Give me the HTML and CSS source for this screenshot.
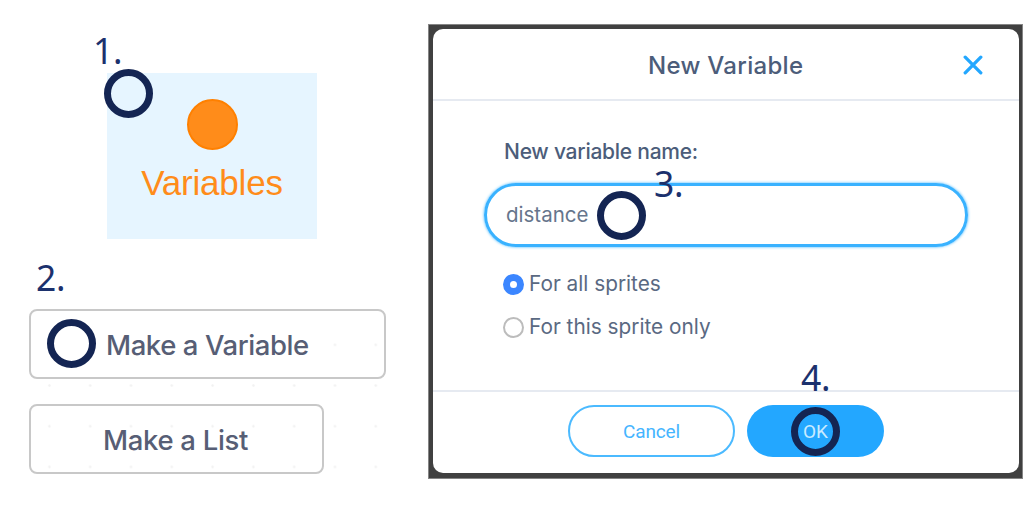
FILE: index.html
```html
<!DOCTYPE html>
<html lang="en">
<head>
<meta charset="utf-8">
<title>New Variable</title>
<link rel="stylesheet" href="styles.css">
</head>
<body>
<main class="guide">
  <section class="palette">
    <div class="category">
      <span class="category-dot"></span>
      <span class="category-name">Variables</span>
    </div>
    <div class="actions">
      <div class="action action-variable"><span>Make a Variable</span></div>
      <div class="action action-list"><span>Make a List</span></div>
    </div>
  </section>
  <section class="backdrop">
    <div class="dialog">
      <header class="dialog-head">
        <h1 class="title">New Variable</h1>
        <svg class="close" viewBox="0 0 20 20"><path d="M2.2 2.2L17.8 17.8M17.8 2.2L2.2 17.8"/></svg>
      </header>
      <div class="dialog-body">
        <div class="field-label"><span>New variable name:</span></div>
        <div class="field"><span>distance</span></div>
        <div class="option"><i class="radio radio-on"></i><span>For all sprites</span></div>
        <div class="option"><i class="radio"></i><span>For this sprite only</span></div>
      </div>
      <footer class="dialog-foot">
        <div class="btn btn-cancel">Cancel</div>
        <div class="btn btn-ok">OK</div>
      </footer>
    </div>
  </section>
  <span class="step step-1">1.</span><i class="ring ring-1"></i>
  <span class="step step-2">2.</span><i class="ring ring-2"></i>
  <span class="step step-3">3.</span><i class="ring ring-3"></i>
  <span class="step step-4">4.</span><i class="ring ring-4"></i>
</main>
</body>
</html>
```
FILE: styles.css
```css
* { box-sizing: border-box; }
body { margin: 0; background: #fff; font-family: Inter, "Liberation Sans", sans-serif; white-space: nowrap; overflow: hidden; }
.guide { position: relative; display: flex; width: 1024px; height: 507px; }

.palette { width: 428px; padding-top: 73px; flex: none; }
.category { width: 210px; height: 166px; margin-left: 107px; padding-top: 26px; display: flex; flex-direction: column; align-items: center; background: #e6f5ff; }
.category-dot { width: 51px; height: 51px; border-radius: 50%; background: #ff8c1a; border: 2px solid #ff8000; }
.category-name { margin-top: 13px; font: 35px/40px "Liberation Sans", Arial, sans-serif; letter-spacing: -.2px; color: #ff8c1a; }

.actions { width: 368px; height: 165px; margin: 70px 0 0 29px; display: flex; flex-direction: column; gap: 25px; background: radial-gradient(circle, #f1f1f1 0, #f1f1f1 .8px, transparent 1.6px) 0 15.5px / 40.8px 40.7px; }
.action { height: 70px; border: 2px solid #c8c8c8; border-radius: 8px; display: flex; align-items: center; font-size: 27.5px; font-weight: 500; color: #575e75; letter-spacing: -.42px; }
.action span { margin-top: 2px; }
.action-variable { width: 357px; padding-left: 75px; background: linear-gradient(#fff, #fff) 0 0 / 290px 100% no-repeat; }
.action-list { width: 295px; padding-left: 72px; letter-spacing: -.32px; }

.backdrop { width: 595px; height: 455px; margin-top: 24px; padding: 4px 3px 5px 4px; background: #404040; border: 1px solid #858585; flex: none; }
.dialog { height: 444px; background: #fff; border-radius: 10px; display: flex; flex-direction: column; color: #4c5d7a; }
.dialog-head { height: 72px; border-bottom: 2px solid #e6eaf1; display: flex; align-items: center; padding: 2px 36px 0 215px; justify-content: space-between; }
.title { margin: 0; font-size: 24px; font-weight: 500; letter-spacing: .3px; }
.close { width: 20px; height: 20px; fill: none; stroke: #23a7ff; stroke-width: 3.3; stroke-linecap: round; }
.dialog-body { flex: 1; padding: 39px 51px 0; }
.field-label { height: 24px; padding-left: 20px; font-size: 21px; line-height: 24px; font-weight: 500; letter-spacing: -.25px; }
.field { margin-top: 19px; height: 64px; border: 3px solid #39b2ff; border-radius: 32px; box-shadow: 0 0 3px #39b2ff; padding-left: 19px; display: flex; align-items: center; font-size: 20.5px; line-height: 24px; color: #66758c; margin-bottom: 23px; }
.field span { margin-top: -1px; }
.option { height: 28px; margin-bottom: 15px; padding-left: 19px; display: flex; align-items: center; gap: 5px; font-size: 20.8px; color: #5a6982; }
.option span { margin-top: -1px; }
.radio { width: 21px; height: 21px; border-radius: 50%; border: 2px solid #bcbcbc; }
.radio-on { border: 7px solid #3b86ff; }
.dialog-foot { height: 83px; border-top: 2px solid #e6eaf1; display: flex; gap: 12px; padding: 13px 0 0 135px; }
.btn { height: 52px; border-radius: 26px; display: flex; align-items: center; justify-content: center; font: 19px Roboto, sans-serif; letter-spacing: -.1px; }
.btn-cancel { width: 167px; border: 2px solid #4bbaff; color: #45b5ff; }
.btn-ok { width: 137px; background: #23a7ff; color: #c9ebff; }

.step { position: absolute; font: 35.5px/36px "Noto Sans", sans-serif; color: #1c316d; letter-spacing: -.3px; }
.step-1 { left: 93px; top: 32px; }
.step-2 { left: 36px; top: 259px; }
.step-3 { left: 654px; top: 165px; }
.step-4 { left: 801px; top: 359px; }
.ring { position: absolute; width: 49px; height: 49px; border: 7px solid #142553; border-radius: 50%; }
.ring-1 { left: 103.5px; top: 69px; }
.ring-2 { left: 47.4px; top: 318.5px; }
.ring-3 { left: 597px; top: 190.5px; }
.ring-4 { left: 791px; top: 407px; }
```
